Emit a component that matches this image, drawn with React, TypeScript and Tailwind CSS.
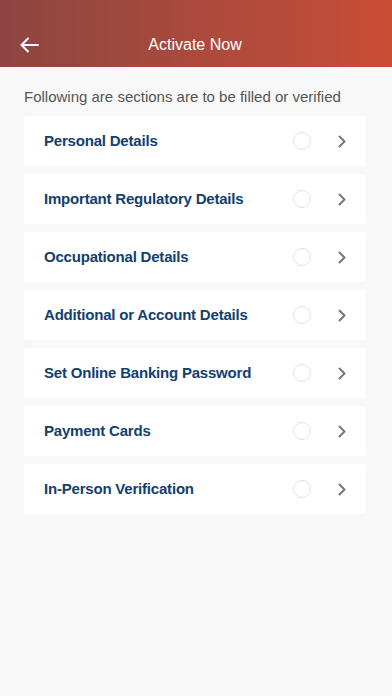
import React from "react";

const items = [
  "Personal Details",
  "Important Regulatory Details",
  "Occupational Details",
  "Additional or Account Details",
  "Set Online Banking Password",
  "Payment Cards",
  "In-Person Verification",
];

export default function App() {
  return (
    <div
      className="w-[392px] h-[696px] bg-[#f8f8f8] flex flex-col"
      style={{ fontFamily: '"Liberation Sans", Arial, sans-serif' }}
    >
      <div className="h-[67px] bg-gradient-to-r from-[#8d4541] to-[#c94d35] flex items-end pb-[12px] relative">
        <div className="w-full flex items-center h-[20px] px-[20px]">
          <svg width="19" height="16" viewBox="0 0 19 16" fill="none" stroke="white" strokeWidth="2" strokeLinecap="round" strokeLinejoin="round">
            <path d="M18 8H2" />
            <path d="M8 1.5L1.5 8L8 14.5" />
          </svg>
          <div className="flex-1 text-center text-white text-[16px] pr-[21px]">Activate Now</div>
        </div>
      </div>
      <div className="px-[24px] pt-[21px] text-[#555555] text-[15px] leading-[18px]">
        Following are sections are to be filled or verified
      </div>
      <div className="flex flex-col gap-[8px] pt-[10px] pl-[24px] pr-[26px]">
        {items.map((t) => (
          <div key={t} className="h-[50px] bg-white rounded-[3px] flex items-center pl-[20px] pr-[20px]">
            <div className="flex-1 text-[#12406f] font-bold text-[15px] tracking-[-0.2px]">{t}</div>
            <div className="w-[18px] h-[18px] rounded-full border border-[#e3e3e3] mr-[27px]" />
            <svg width="8" height="13" viewBox="0 0 8 13" fill="none" stroke="#777777" strokeWidth="2" strokeLinecap="round" strokeLinejoin="round">
              <path d="M1.5 1.5L6.5 6.5L1.5 11.5" />
            </svg>
          </div>
        ))}
      </div>
    </div>
  );
}
